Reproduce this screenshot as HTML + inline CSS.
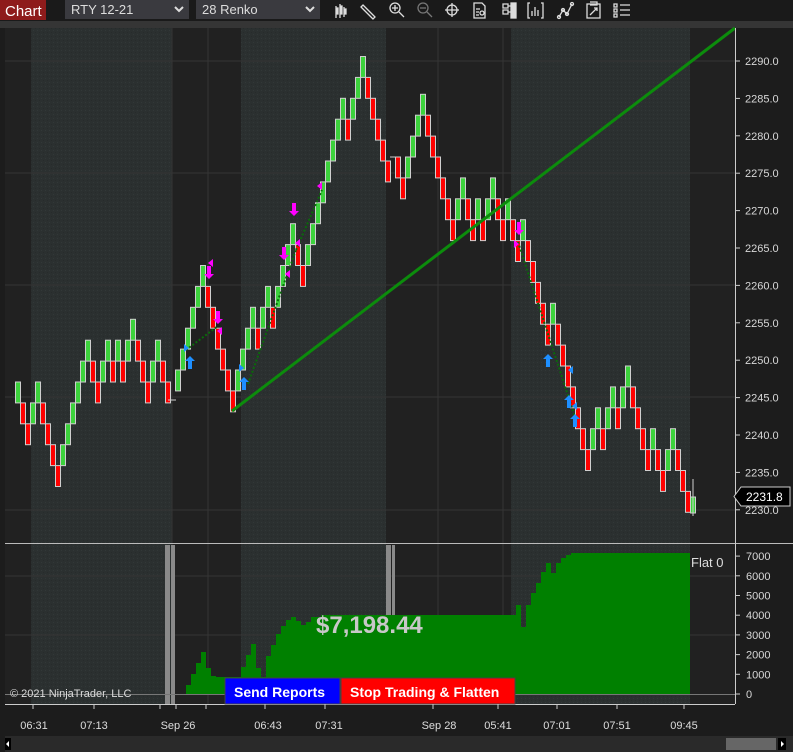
<!DOCTYPE html>
<html><head><meta charset="utf-8">
<style>
html,body{margin:0;padding:0;background:#1c1c1c;width:793px;height:752px;overflow:hidden;font-family:"Liberation Sans",sans-serif}
svg{position:absolute;left:0;top:0}
</style></head>
<body>
<svg id="s" width="793" height="752" xmlns="http://www.w3.org/2000/svg">
<defs>
<pattern id="tex" width="4" height="4" patternUnits="userSpaceOnUse"><rect width="4" height="4" fill="#2b3030"/><rect x="1" y="2" width="1" height="1" fill="#323838"/><rect x="3" y="0" width="1" height="1" fill="#272b2b"/></pattern>
</defs>
<rect x="0" y="0" width="793" height="21" fill="#1a1a1a"/>
<rect x="0" y="21" width="793" height="7" fill="#353535"/>
<rect x="0" y="0" width="46" height="20" fill="#8e1b1b"/>
<text x="5" y="16" fill="#fff" font-size="15">Chart</text>
<rect x="65" y="0" width="124" height="19" fill="#3a3a3f"/>
<text x="71" y="14" fill="#ddd" font-size="13">RTY 12-21</text>
<path d="M175 7l4 4 4-4" stroke="#ddd" stroke-width="2" fill="none"/>
<rect x="196" y="0" width="124" height="19" fill="#3a3a3f"/>
<text x="202" y="14" fill="#ddd" font-size="13">28 Renko</text>
<path d="M306 7l4 4 4-4" stroke="#ddd" stroke-width="2" fill="none"/>
<g stroke="#ddd" fill="none" stroke-width="1.3">
<path d="M336 6v12M340 4v14M344 7v10M336 8h2v6h-2M340 6h2v8h-2M344 9h2v5h-2" fill="#ddd"/>
<path d="M363 5l12 12M361 7l12 12M361 7l2-2 12 12-2 2z"/>
<circle cx="395" cy="8" r="5"/><path d="M399 12l5 5M392 8h6M395 5v6"/>
<circle cx="423" cy="8" r="5" stroke="#777"/><path d="M427 12l5 5M420 8h6" stroke="#777"/>
<circle cx="452" cy="10" r="5"/><path d="M452 3v14M445 10h14"/>
<path d="M474 3h8l3 3v12h-11z M476 9h4M476 12h3M476 15h3"/><circle cx="482" cy="13" r="2"/>
<path d="M503 4h5v4h-5zM503 10h5v4h-5zM508 6h3M508 12h3"/><rect x="511" y="3" width="5" height="15" fill="#ddd"/>
<path d="M530 3h-2v15h2M541 3h2v15h-2M532 16v-5M535 16v-9M538 16v-6"/>
<path d="M559 17l4-7 4 4 5-10"/><circle cx="559" cy="17" r="1.5"/><circle cx="563" cy="10" r="1.5"/><circle cx="567" cy="14" r="1.5"/><circle cx="572" cy="4" r="1.5"/>
<path d="M587 4h13v14h-13zM590 2h7v3h-7M590 15l7-7M594 8h3v3"/>
<path d="M614 4h3v3h-3zM614 9h3v3h-3zM614 14h3v3h-3zM620 5h10M620 10h10M620 15h10"/>
</g>
<rect x="5" y="28" width="730" height="676" fill="#212121"/>
<g fill="url(#tex)">
<rect x="31" y="28" width="141" height="676"/>
<rect x="241" y="28" width="145" height="676"/>
<rect x="511" y="28" width="179" height="676"/>
</g>
<g stroke="#353535" stroke-width="1">
<path d="M5 61h730M5 173h730M5 285h730M5 397h730M5 510h730"/>
<path d="M172 28v676M208 28v676M438 28v676M503 28v676"/>
<path d="M5 576h730M5 635h730"/>
</g>
<rect x="165" y="545" width="5" height="159" fill="#8a8a8a"/><rect x="171" y="545" width="4" height="159" fill="#8a8a8a"/>
<rect x="386" y="545" width="5" height="159" fill="#8a8a8a"/><rect x="392" y="545" width="3" height="159" fill="#8a8a8a"/>
<g id="eq"></g>
<g id="bricks"></g>
<line x1="232" y1="411" x2="735" y2="28" stroke="#0c8c0c" stroke-width="3"/>
<g stroke="#0a6a0a" stroke-width="2" stroke-dasharray="2 2" fill="none">
<path d="M186 350L218 326M248 384L296 250M296 250L322 190M518 242L576 420"/>
</g>
<g fill="#ff00ff">
<path d="M207 266h4v8h3l-5 5-5-5h3z"/><path d="M216 311h4v8h3l-5 5-5-5h3z"/>
<path d="M292 203h4v8h3l-5 5-5-5h3z"/><path d="M282 247h4v8h3l-5 5-5-5h3z"/><path d="M517 222h4v8h3l-5 5-5-5h3z"/>
<path d="M213 259l-5 4 5 4z"/><path d="M222 327l-5 4 5 4z"/><path d="M322 182l-5 4 5 4z"/><path d="M300 239l-5 4 5 4z"/><path d="M290 270l-5 4 5 4z"/><path d="M514 240l5 4-5 4z"/>
</g>
<g fill="#1e8fff">
<path d="M188 369h4v-8h3l-5-5-5 5h3z"/><path d="M242 390h4v-8h3l-5-5-5 5h3z"/><path d="M546 367h4v-8h3l-5-5-5 5h3z"/><path d="M567 408h4v-8h3l-5-5-5 5h3z"/><path d="M573 427h4v-8h3l-5-5-5 5h3z"/>
<path d="M184 344l5 4-5 4z"/><path d="M239 364l5 4-5 4z"/><path d="M573 366l-5 4 5 4z"/><path d="M577 402l-5 4 5 4z"/>
</g>
<line x1="5" y1="543.5" x2="793" y2="543.5" stroke="#bbb"/>
<line x1="5" y1="694.5" x2="735" y2="694.5" stroke="#777"/>
<line x1="735.5" y1="28" x2="735.5" y2="704" stroke="#ccc"/>
<line x1="5" y1="704.5" x2="735" y2="704.5" stroke="#ccc"/>
<g id="axis" fill="#d8d8d8" font-size="11"></g>
<path d="M741 487h49v19h-49l-7-9.5z" fill="#000" stroke="#ccc"/>
<text x="746" y="501" fill="#fff" font-size="12">2231.8</text>
<text x="691" y="567" fill="#ddd" font-size="13">Flat 0</text>
<text x="316" y="633" fill="#c8c8c8" font-size="24" font-weight="bold">$7,198.44</text>
<rect x="225" y="678" width="115" height="26" fill="#0000ff" stroke="#444"/>
<text x="234" y="697" fill="#fff" font-size="14" font-weight="bold">Send Reports</text>
<rect x="341" y="678" width="174" height="26" fill="#ff0000" stroke="#444"/>
<text x="350" y="697" fill="#fff" font-size="14" font-weight="bold">Stop Trading &amp; Flatten</text>
<text x="10" y="697" fill="#ddd" font-size="11">© 2021 NinjaTrader, LLC</text>
<g fill="#ddd" font-size="11" text-anchor="middle">
<text x="34" y="729">06:31</text><text x="94" y="729">07:13</text><text x="178" y="729">Sep 26</text><text x="268" y="729">06:43</text><text x="329" y="729">07:31</text><text x="439" y="729">Sep 28</text><text x="498" y="729">05:41</text><text x="557" y="729">07:01</text><text x="617" y="729">07:51</text><text x="684" y="729">09:45</text>
</g>
<g stroke="#ccc"><path d="M33 704v5M94 704v5M160 704v5M176 704v5M206 704v5M265 704v5M325 704v5M433 704v5M498 704v5M557 704v5M617 704v5M684 704v5"/></g>
<rect x="5" y="736" width="788" height="16" fill="#2a2a2a"/>
<rect x="5" y="738" width="6" height="12" fill="#000"/><path d="M9 741l-3 3 3 3z" fill="#fff"/>
<rect x="726" y="738" width="50" height="12" fill="#666"/>
<rect x="778" y="738" width="8" height="12" fill="#000"/><path d="M781 741l3 3-3 3z" fill="#fff"/>
</svg>
<script>
var NS="http://www.w3.org/2000/svg",B=document.getElementById("bricks");
function el(p,t,a){var e=document.createElementNS(NS,t);for(var k in a)e.setAttribute(k,a[k]);p.appendChild(e);return e;}
var H=20.9;
function sess(x0,y0,k0,seq){var k=k0,x=x0;for(var i=0;i<seq.length;i++){var c=seq[i];if(i>0){k+=(c=="G"?-1:1);}
el(B,"rect",{x:x-2.5,y:y0+k*H,width:5,height:H,fill:c=="G"?"#3cd23c":"#ff0000",stroke:"#cfcfcf","stroke-width":1});x+=5;}}
sess(18,382,0,"GRRGGRRRRGGGGGGRRGGRGRGGRRRGGRR");
sess(178,370,0,"GGGGGGRRRRRRGGGGRGGRGGGGRRGGGGGGGGRGGGRRRRR");
sess(398,157,0,"RRGGGGRRRRRRGGRRGRGGRRGRRGRRRRRGRRRRRRRGGRGGRGGRRRRGRRGGRRR");
el(B,"rect",{x:690.5,y:497,width:5,height:16,fill:"#3cd23c",stroke:"#cfcfcf"});
el(B,"line",{x1:693,y1:479,x2:693,y2:516,stroke:"#cfcfcf"});
el(B,"line",{x1:168,y1:400,x2:176,y2:400,stroke:"#cfcfcf"});
el(B,"line",{x1:390,y1:157,x2:396,y2:157,stroke:"#cfcfcf"});
var E=document.getElementById("eq");
var st=[[186,685],[191,674],[196,663],[201,652],[206,668],[211,676],[216,677],[241,667],[246,655],[251,644],[256,668],[261,677],[266,656],[271,645],[276,634],[281,626],[286,620],[291,617],[296,621],[301,625],[306,622],[311,617],[321,615],[516,605],[521,627],[526,605],[531,593],[536,583],[541,572],[546,563],[551,573],[556,563],[561,558],[566,555],[571,553],[690,0]];
var d="M186 694";for(var i=0;i<st.length-1;i++){d+="V"+st[i][1]+"H"+st[i+1][0];}d+="V694Z";
el(E,"path",{d:d,fill:"#008000"});
var A=document.getElementById("axis");
for(var i=0;i<=12;i++){var y=61+i*37.4;el(A,"text",{x:745,y:y+4}).textContent=(2290-5*i)+".0";el(A,"line",{x1:735,y1:y,x2:740,y2:y,stroke:"#ccc"});}
for(var i=0;i<=7;i++){var y=694-i*19.7;el(A,"text",{x:746,y:y+4}).textContent=(i*1000)+"";el(A,"line",{x1:735,y1:y,x2:740,y2:y,stroke:"#ccc"});}
</script>
</body></html>
